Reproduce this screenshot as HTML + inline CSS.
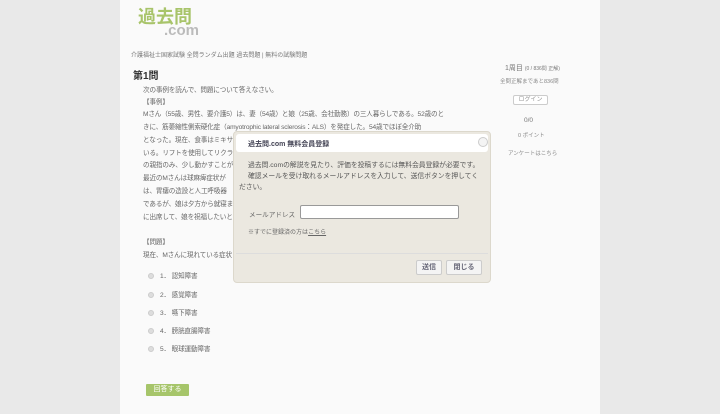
<!DOCTYPE html>
<html><head><meta charset="utf-8"><style>
*{margin:0;padding:0;box-sizing:border-box}
body{width:720px;height:414px;background:#e9e9e9;font-family:"Liberation Sans","Noto Sans CJK JP",sans-serif;color:#555;position:relative;overflow:hidden;font-size:7.5px}
.col{position:absolute;left:120px;top:0;width:480px;height:414px;background:#fafafa}
.a{position:absolute;white-space:nowrap}
.logo1{left:138px;top:6px;font-size:18px;font-weight:bold;color:#a8c46a;line-height:22px}
.logo2{left:164px;top:23px;font-size:15px;font-weight:bold;color:#bbb;line-height:16px}
.t{font-size:6.6px;color:#666;letter-spacing:-0.15px}
.dlg{position:absolute;left:233px;top:131px;width:258px;height:152px;background:#ebe8e0;border:1px solid #dcd8cc;border-radius:4px}
.hd{position:absolute;left:2px;top:2px;right:2px;height:18px;background:#fff;border-radius:3px}
.btn{position:absolute;top:128px;height:15px;background:#f4f4f4;border:1px solid #ccc;border-radius:2px;font-size:7px;font-weight:bold;color:#667;text-align:center;line-height:13px}
.rad{display:inline-block;width:6px;height:6px;border-radius:50%;background:#ddd;border:1px solid #ccc;margin-right:6px;vertical-align:middle}
</style></head><body>
<div class="col"></div>
<div class="a logo1">過去問</div>
<div class="a logo2">.com</div>
<div class="a" style="left:131px;top:50px;font-size:6px;color:#777">介護福祉士国家試験 全問ランダム出題 過去問題 | 無料の試験問題</div>
<div class="a" style="left:133px;top:67px;font-size:10px;font-weight:bold;color:#333">第1問</div>
<div class="a t" style="left:143px;top:84px">次の事例を読んで、問題について答えなさい。</div>
<div class="a t" style="left:143px;top:96px">【事例】</div>
<div class="a t" style="left:143px;top:108px">Mさん（55歳、男性、要介護5）は、妻（54歳）と娘（25歳、会社勤務）の三人暮らしである。52歳のと</div>
<div class="a t" style="left:143px;top:121px">きに、筋萎縮性側索硬化症（amyotrophic lateral sclerosis：ALS）を発症した。54歳でほぼ全介助</div>
<div class="a t" style="left:143px;top:134px">となった。現在、食事はミキサー</div>
<div class="a t" style="left:143px;top:147px">いる。リフトを使用してリクライニ</div>
<div class="a t" style="left:143px;top:159px">の親指のみ、少し動かすことが</div>
<div class="a t" style="left:143px;top:172px">最近のMさんは球麻痺症状が</div>
<div class="a t" style="left:143px;top:185px">は、胃瘻の造設と人工呼吸器</div>
<div class="a t" style="left:143px;top:198px">であるが、娘は夕方から就寝ま</div>
<div class="a t" style="left:143px;top:211px">に出席して、娘を祝福したいと</div>
<div class="a t" style="left:143px;top:236px">【問題】</div>
<div class="a t" style="left:143px;top:249px">現在、Mさんに現れている症状</div>
<div class="a t" style="left:148px;top:270px"><span class="rad"></span>1． 認知障害</div>
<div class="a t" style="left:148px;top:289px"><span class="rad"></span>2． 感覚障害</div>
<div class="a t" style="left:148px;top:307px"><span class="rad"></span>3． 嚥下障害</div>
<div class="a t" style="left:148px;top:325px"><span class="rad"></span>4． 膀胱直腸障害</div>
<div class="a t" style="left:148px;top:343px"><span class="rad"></span>5． 眼球運動障害</div>
<div class="a" style="left:146px;top:384px;width:43px;height:12px;background:#a6c56a;color:#fff;font-size:7px;text-align:center;line-height:12px;border-radius:1px">回答する</div>
<div class="a" style="left:505px;top:63px;font-size:7px;color:#777">1周目 <span style="font-size:5px">(0 / 836問 正解)</span></div>
<div class="a" style="left:500px;top:77px;font-size:5.5px;color:#888">全問正解まであと836問</div>
<div class="a" style="left:513px;top:95px;width:35px;height:10px;border:1px solid #ccc;border-radius:2px;background:#fff;font-size:6px;color:#999;text-align:center;line-height:8px">ログイン</div>
<div class="a" style="left:524px;top:117px;font-size:6.5px;color:#777">0/0</div>
<div class="a" style="left:518px;top:131px;font-size:5.5px;color:#888">0 ポイント</div>
<div class="a" style="left:508px;top:149px;font-size:5.5px;color:#888">アンケートはこちら</div>
<div class="dlg">
<div class="hd"></div>
<div class="a" style="left:14px;top:7px;font-size:7px;font-weight:bold;color:#445">過去問.com 無料会員登録</div>
<div class="a" style="left:244px;top:5px;width:10px;height:10px;border-radius:50%;border:1px solid #ccc;background:#f4f4f4"></div>
<div class="a" style="left:14px;top:27px;font-size:6.8px;color:#555">過去問.comの解説を見たり、評価を投稿するには無料会員登録が必要です。</div>
<div class="a" style="left:14px;top:38px;font-size:6.8px;color:#555">確認メールを受け取れるメールアドレスを入力して、送信ボタンを押してく</div>
<div class="a" style="left:5px;top:49px;font-size:6.8px;color:#555">ださい。</div>
<div class="a" style="left:15px;top:77px;font-size:6.6px;color:#666">メールアドレス</div>
<div class="a" style="left:66px;top:73px;width:159px;height:14px;background:#fff;border:1px solid #999;border-radius:2px"></div>
<div class="a" style="left:14px;top:95px;font-size:6px;color:#666">※すでに登録済の方は<u>こちら</u></div>
<div class="a" style="left:2px;top:121px;width:252px;border-top:1px solid #ddd"></div>
<div class="btn" style="left:182px;width:26px">送信</div>
<div class="btn" style="left:212px;width:36px">閉じる</div>
</div>
</body></html>
